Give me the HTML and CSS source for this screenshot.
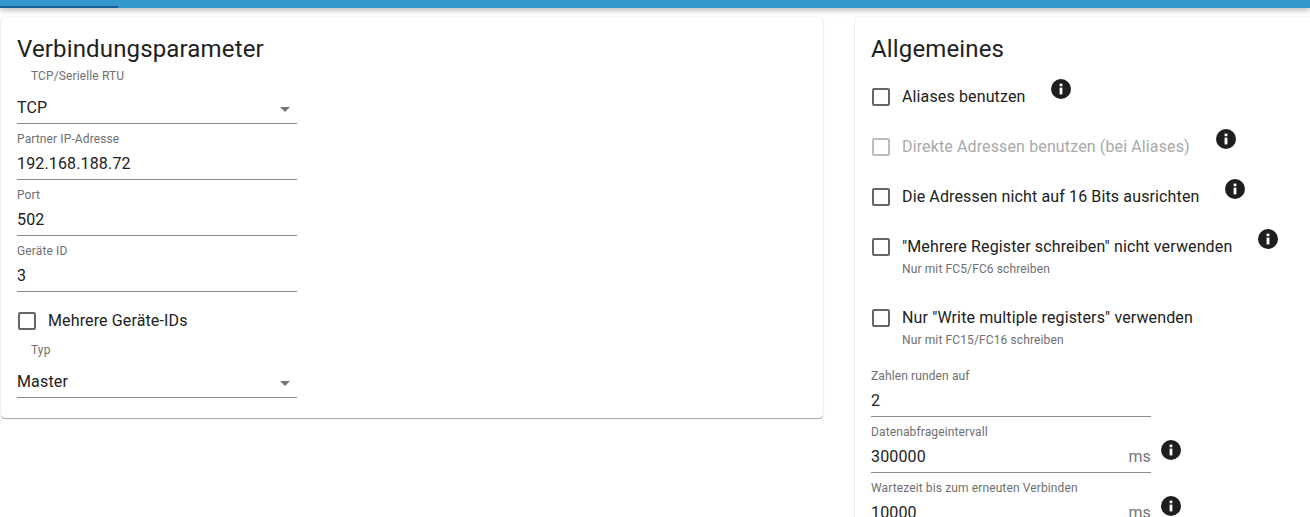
FILE: index.html
```html
<!DOCTYPE html>
<html lang="de">
<head>
    <meta charset="UTF-8">
    <meta name="viewport" content="width=device-width, initial-scale=1.0">
    <title>Verbindungsparameter</title>
    <link rel="stylesheet" href="styles.css">
</head>
<body>
    <svg class="icon-defs" width="0" height="0">
        <symbol id="info" viewBox="0 0 20 20">
            <circle cx="10" cy="10" r="10" fill="#1e1e1e"/>
            <rect x="8.6" y="8.6" width="2.8" height="6.8" fill="#fff"/>
            <rect x="8.6" y="4.6" width="2.8" height="2.6" fill="#fff"/>
        </symbol>
    </svg>

    <header class="topbar">
        <div class="tab-indicator"></div>
    </header>

    <main class="content">
        <section class="card card-left">
            <h2>Verbindungsparameter</h2>

            <div class="field field-select">
                <label>TCP/Serielle RTU</label>
                <div class="value">TCP<span class="arrow"></span></div>
            </div>
            <div class="field">
                <label>Partner IP-Adresse</label>
                <div class="value">192.168.188.72</div>
            </div>
            <div class="field">
                <label>Port</label>
                <div class="value">502</div>
            </div>
            <div class="field">
                <label>Geräte ID</label>
                <div class="value">3</div>
            </div>

            <div class="check check-left">
                <span class="box"></span>
                <span class="check-text">Mehrere Geräte-IDs</span>
            </div>

            <div class="field field-select field-typ">
                <label>Typ</label>
                <div class="value">Master<span class="arrow"></span></div>
            </div>
        </section>

        <section class="card card-right">
            <h2>Allgemeines</h2>

            <div class="check-row check-row-first">
                <div class="check">
                    <span class="box"></span>
                    <span>Aliases benutzen</span>
                </div>
                <svg class="info"><use href="#info"/></svg>
            </div>
            <div class="check-row disabled">
                <div class="check">
                    <span class="box"></span>
                    <span>Direkte Adressen benutzen (bei Aliases)</span>
                </div>
                <svg class="info"><use href="#info"/></svg>
            </div>
            <div class="check-row">
                <div class="check">
                    <span class="box"></span>
                    <span>Die Adressen nicht auf 16 Bits ausrichten</span>
                </div>
                <svg class="info"><use href="#info"/></svg>
            </div>
            <div class="check-row">
                <div class="check">
                    <span class="box"></span>
                    <span>"Mehrere Register schreiben" nicht verwenden</span>
                </div>
                <svg class="info"><use href="#info"/></svg>
            </div>
            <p class="help">Nur mit FC5/FC6 schreiben</p>
            <div class="check-row">
                <div class="check">
                    <span class="box"></span>
                    <span>Nur "Write multiple registers" verwenden</span>
                </div>
            </div>
            <p class="help">Nur mit FC15/FC16 schreiben</p>

            <div class="field-row field-first">
                <div class="field">
                    <label>Zahlen runden auf</label>
                    <div class="value">2</div>
                </div>
            </div>
            <div class="field-row">
                <div class="field">
                    <label>Datenabfrageintervall</label>
                    <div class="value">300000<span class="unit">ms</span></div>
                </div>
                <svg class="info"><use href="#info"/></svg>
            </div>
            <div class="field-row">
                <div class="field">
                    <label>Wartezeit bis zum erneuten Verbinden</label>
                    <div class="value">10000<span class="unit">ms</span></div>
                </div>
                <svg class="info"><use href="#info"/></svg>
            </div>
        </section>
    </main>
</body>
</html>
```

FILE: styles.css
```css
* {
    box-sizing: border-box;
}

html, body {
    height: 517px;
    overflow: hidden;
}

body {
    font-family: Roboto, 'Liberation Sans', sans-serif;
    background: #fff;
    color: #212121;
    margin: 0;
    padding: 0;
}

.icon-defs {
    display: block;
    height: 0;
}

.topbar {
    height: 8px;
    background: #3399cc;
    box-shadow: 0 2px 6px rgba(0, 0, 0, 0.3);
    display: flex;
    align-items: flex-end;
}

.tab-indicator {
    width: 118px;
    height: 2px;
    background: #1a5f93;
}

.content {
    display: flex;
    align-items: flex-start;
    padding: 9px 0 0 1px;
    gap: 32px;
}

.card {
    background: #fff;
    border-radius: 4px;
    padding: 16px;
    flex: none;
    box-shadow: 0 1px 1px rgba(0, 0, 0, 0.35), 0 0 2px rgba(0, 0, 0, 0.1);
}

.card-left {
    width: 822px;
    height: 401px;
}

.card-right {
    width: 470px;
    height: 520px;
}

h2 {
    font-size: 24px;
    font-weight: 400;
    line-height: 32px;
    letter-spacing: 0.15px;
    margin: 0;
}

.field {
    width: 280px;
    height: 56px;
    border-bottom: 1px solid #8c8c8c;
    flex: none;
}

.field label {
    display: block;
    font-size: 12px;
    line-height: 14px;
    letter-spacing: 0.12px;
    color: #6f6f6f;
    padding-top: 8px;
}

.value {
    font-size: 16px;
    line-height: 20px;
    letter-spacing: 0.15px;
    margin-top: 8px;
    display: flex;
    justify-content: space-between;
    align-items: center;
}

.field-select {
    height: 59px;
}

.field-select label {
    padding: 4px 0 0 14px;
}

.field-select .value {
    margin-top: 15px;
}

.arrow {
    width: 0;
    height: 0;
    border-left: 5px solid transparent;
    border-right: 5px solid transparent;
    border-top: 5px solid #757575;
    margin-right: 7px;
    margin-top: 2px;
}

.unit {
    color: #757575;
}

.check {
    display: flex;
    align-items: center;
    font-size: 16px;
    line-height: 20px;
    letter-spacing: 0.13px;
    gap: 12px;
}

.check-left {
    height: 48px;
    padding-left: 1px;
    margin-top: 5px;
    margin-bottom: -2px;
}

.check-text {
    margin-top: -1px;
}

.field-typ {
    height: 55px;
    margin-top: -1px;
}

.field-typ label {
    padding-top: 0;
}

.box {
    width: 18px;
    height: 18px;
    border: 2px solid #666;
    border-radius: 2px;
    flex: none;
}

.check-row {
    height: 50px;
    display: flex;
    align-items: center;
    padding-left: 1px;
    gap: 26px;
}

.check-row-first {
    margin-top: 7px;
}

.disabled {
    color: #a9a9a9;
}

.disabled .box {
    border-color: #bdbdbd;
}

.info {
    width: 20px;
    height: 20px;
    flex: none;
    margin-top: -16px;
}

.help {
    font-size: 12px;
    line-height: 14px;
    letter-spacing: 0.12px;
    color: #6f6f6f;
    margin: -10px 0 17px 31px;
}

.field-row {
    display: flex;
    align-items: center;
    gap: 10px;
}

.field-first {
    margin-top: -3px;
}

.field-row .info {
    margin-top: 10px;
}
```
